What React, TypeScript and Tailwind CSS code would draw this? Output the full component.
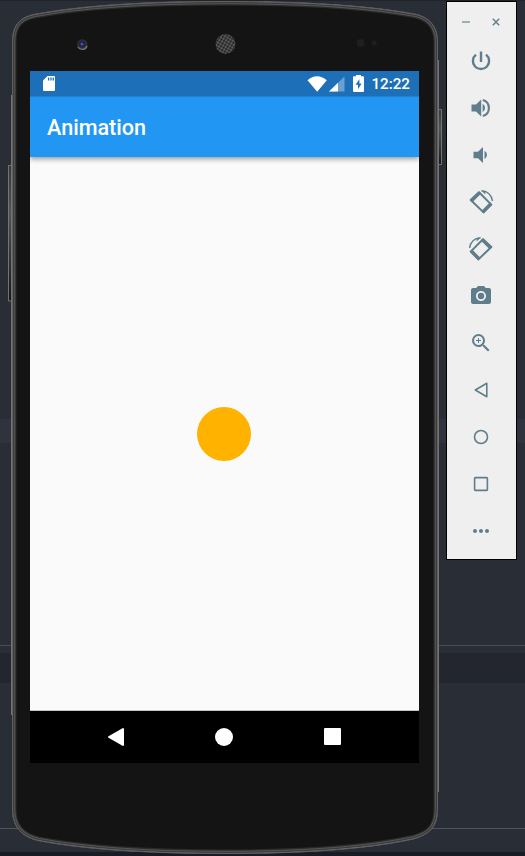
import React from "react";
import { MdCameraAlt, MdZoomIn, MdMoreHoriz } from "react-icons/md";

function Backdrop() {
  return (
    <div className="absolute inset-0 flex flex-col bg-[#292d36]">
      <div className="h-px bg-[#20232b]" />
      <div className="h-[418px]" />
      <div className="h-6 bg-[#2f333e]" />
      <div className="h-[202px]" />
      <div className="h-px bg-[#494c54]" />
      <div className="h-[7px]" />
      <div className="h-[30px] bg-[#23262e]" />
      <div className="h-[145px]" />
      <div className="h-px bg-[#50535a]" />
      <div className="h-[23px]" />
      <div className="h-1 bg-[#191c25]" />
    </div>
  );
}

const BODY =
  "M12.5 42 C12.5 27 18 18 34 14.5 C88 4.5 156 1.5 225 1.5 C294 1.5 362 4.5 414 14 C430 17 437.5 27 437.5 42 V808 C437.5 826 431 834 413 839 C362 850 294 853.5 225 853.5 C156 853.5 88 850 38 840.5 C20 836 12.5 826 12.5 808 Z";

function PhoneShell() {
  return (
    <svg className="absolute inset-0" width="525" height="856" viewBox="0 0 525 856">
      <defs>
        <linearGradient id="key" x1="0" x2="0" y1="0" y2="1">
          <stop offset="0" stopColor="#383838" />
          <stop offset="0.35" stopColor="#535353" />
          <stop offset="0.8" stopColor="#292929" />
          <stop offset="1" stopColor="#161616" />
        </linearGradient>
        <pattern id="mesh" width="3" height="3" patternUnits="userSpaceOnUse" patternTransform="rotate(30)">
          <rect width="3" height="3" fill="#666" />
          <circle cx="1.5" cy="1.5" r="1.15" fill="#161616" />
        </pattern>
        <clipPath id="body">
          <path d={BODY} />
        </clipPath>
      </defs>
      <path d="M12 165.5 H8.5 V301 H12" fill="url(#key)" stroke="#747474" />
      <path d="M438 109.5 H441.5 V164.5 H438" fill="url(#key)" stroke="#747474" />
      <path d="M11.5 95 V715 M438.5 60 V792" stroke="#747474" />
      <path d={BODY} fill="#141414" stroke="#7c7c7c" />
      <g fill="none" clipPath="url(#body)">
        <path d={BODY} stroke="#2b2b2b" strokeWidth="8" />
        <path d={BODY} stroke="#555" strokeWidth="5.6" />
        <path d={BODY} stroke="#3c3c3c" strokeWidth="3.4" />
        <path d={BODY} stroke="#7c7c7c" strokeWidth="1" />
      </g>
      <circle cx="82.3" cy="44.5" r="5.3" fill="#303030" />
      <path d="M78 47 A5 5 0 0 0 87 46" fill="none" stroke="#777" strokeWidth="1.4" />
      <circle cx="82" cy="44" r="3.2" fill="#20204a" />
      <circle cx="82" cy="44" r="1.5" fill="#4d4da8" />
      <circle cx="225.5" cy="44" r="10" fill="url(#mesh)" />
      <circle cx="360.5" cy="43" r="4" fill="#1f1f1f" />
      <circle cx="374.3" cy="43" r="2.5" fill="#202020" />
    </svg>
  );
}

function StatusBar() {
  return (
    <div className="flex h-[26px] shrink-0 items-center border-b border-[#2380cf] bg-[#1d70b7] text-white">
      <svg className="ml-[13px]" width="12" height="15" viewBox="0 0 12 15">
        <path d="M4.5 0 H11 Q12 0 12 1 V14 Q12 15 11 15 H1 Q0 15 0 14 V4.5 Z" fill="#fff" />
        <path d="M5.6 1.5 V4.5 M8 1.5 V4.5 M10.3 1.5 V4.5" stroke="#1d70b7" strokeWidth="1.3" />
      </svg>
      <div className="ml-auto flex items-center pr-[9px]">
        <svg width="20" height="16" viewBox="0 0 20 16">
          <path d="M.5 4.2 Q10 -3.6 19.8 4.2 L10.2 15.8 Z" fill="#fff" />
        </svg>
        <svg className="ml-0.5" width="16" height="16" viewBox="0 0 16 16">
          <path d="M0 15.5 L15.5 .5 V15.5 Z" fill="#6ba0d0" />
          <path d="M0 15.5 L9 6.8 V15.5 Z" fill="#fff" />
        </svg>
        <svg className="ml-2" width="11" height="17" viewBox="0 0 11 17">
          <path d="M3 0 H8 V1.2 H10 Q11 1.2 11 2.2 V16 Q11 17 10 17 H1 Q0 17 0 16 V2.2 Q0 1.2 1 1.2 H3 Z" fill="#fff" />
          <path d="M6.4 4.3 L2.5 9.8 H5 V14.3 L8.6 8.6 H6.4 Z" fill="#1d70b7" />
        </svg>
        <span className="ml-[7px] pt-px font-[Roboto] text-[15.2px] leading-5 font-medium">12:22</span>
      </div>
    </div>
  );
}

function Screen() {
  return (
    <main className="flex h-[692px] w-[389px] flex-col">
      <StatusBar />
      <header className="z-10 flex h-[60px] shrink-0 items-center bg-[#2196f3] pt-px pl-[17px] shadow-[0_2px_5px_rgba(0,0,0,0.4)] [clip-path:inset(0_0_-12px_0)]">
        <h1 className="font-[Roboto] text-[21.6px] leading-7 font-medium text-white">Animation</h1>
      </header>
      <section className="flex grow items-center justify-center border-b border-[#c2c5c5] bg-[#fafafa]">
        <div className="mr-px size-[54px] rounded-full bg-[#ffb300]" />
      </section>
      <nav className="flex h-[52px] shrink-0 items-center justify-between bg-black pr-[78px] pb-px pl-[77px]">
        <svg className="ml-px" width="16" height="20" viewBox="0 0 16 20">
          <path d="M1 10 L15 2 V18 Z" fill="#fff" stroke="#fff" strokeWidth="2" strokeLinejoin="round" />
        </svg>
        <div className="mr-px size-[18px] rounded-full bg-white" />
        <div className="size-[17px] rounded-[1px] bg-white" />
      </nav>
    </main>
  );
}

function PowerIcon() {
  return (
    <svg width="24" height="24" viewBox="0 0 24 24" fill="none" stroke="currentColor" strokeWidth="2.4">
      <path d="M12 2.5 V13" />
      <path d="M7 5.6 A8.1 8.1 0 1 0 17 5.6" />
    </svg>
  );
}

function VolumeIcon({ loud = false }: { loud?: boolean }) {
  return (
    <svg width="24" height="24" viewBox="0 0 24 24" fill="currentColor">
      {loud ? (
        <>
          <path d="M2.5 8.6 H7 L12.2 3.6 V20.4 L7 15.4 H2.5 Z" />
          <path d="M13.6 7.8 A4.8 4.8 0 0 1 13.6 16.2 Z" />
          <path d="M13.8 4 A8.3 8.3 0 0 1 13.8 20" fill="none" stroke="currentColor" strokeWidth="2.1" />
        </>
      ) : (
        <>
          <path d="M4.5 8.8 H9 L14 4 V20 L9 15.2 H4.5 Z" />
          <path d="M15.5 7.8 A4.8 4.8 0 0 1 15.5 16.2 Z" />
        </>
      )}
    </svg>
  );
}

function RotateIcon({ flip = false }: { flip?: boolean }) {
  return (
    <svg width="24" height="24" viewBox="0 0 24 24" fill="none" stroke="currentColor">
      <g transform={flip ? "translate(24 0) scale(-1 1)" : undefined}>
        <path d="M1.7 10 L10 2.2 L22.3 14.6 L14.6 22.4 Z" strokeWidth="2" strokeLinejoin="round" />
        <path d="M1.7 10 L10 2.2 L11.3 3.5 L3.2 11.5 Z M21 13.3 L22.3 14.6 L14.6 22.4 L13.3 21.1 Z" fill="currentColor" strokeWidth="1.4" strokeLinejoin="round" />
        <path d="M12.5 1 C18.3 .6 22.9 5.2 23.4 11" strokeWidth="1.3" />
        <path d="M12.2 .5 L16.3 1 L16.3 4.4 Z" fill="currentColor" stroke="none" />
      </g>
    </svg>
  );
}

function Toolbar() {
  return (
    <aside className="flex h-[559px] w-[71px] flex-col items-center border border-black bg-[#efefef] text-[#607d8b]">
      <div className="flex h-[35px] w-full items-center pt-1">
        <span className="ml-[15px] h-0.5 w-2 bg-[#9aafb8]" />
        <svg className="ml-[22px]" width="8" height="8" viewBox="0 0 8 8">
          <path d="M.8 .8 L7.2 7.2 M7.2 .8 L.8 7.2" stroke="currentColor" strokeWidth="1.4" />
        </svg>
      </div>
      <div className="mr-px flex flex-col items-center *:flex *:h-[47px] *:items-center *:justify-center">
        <div><PowerIcon /></div>
        <div><VolumeIcon loud /></div>
        <div><VolumeIcon /></div>
        <div><RotateIcon /></div>
        <div><RotateIcon flip /></div>
        <div><MdCameraAlt size={24} /></div>
        <div><MdZoomIn size={24} /></div>
        <div>
          <svg width="14" height="16" viewBox="0 0 14 16">
            <path d="M1.3 8 L12.8 1.3 V14.7 Z" fill="none" stroke="currentColor" strokeWidth="1.6" strokeLinejoin="round" />
          </svg>
        </div>
        <div>
          <svg width="16" height="16" viewBox="0 0 16 16" fill="none" stroke="currentColor" strokeWidth="1.6">
            <circle cx="8" cy="8" r="6.5" />
          </svg>
        </div>
        <div>
          <svg width="16" height="16" viewBox="0 0 16 16" fill="none" stroke="currentColor" strokeWidth="1.6">
            <rect x="1.6" y="1.6" width="12.8" height="12.8" rx="0.8" />
          </svg>
        </div>
        <div><MdMoreHoriz size={24} /></div>
      </div>
    </aside>
  );
}

export default function App() {
  return (
    <div className="relative h-[856px] w-[525px] overflow-hidden">
      <Backdrop />
      <PhoneShell />
      <div className="relative flex items-start">
        <div className="pt-[71px] pl-[30px]">
          <Screen />
        </div>
        <div className="pt-px pl-[27px]">
          <Toolbar />
        </div>
      </div>
    </div>
  );
}
